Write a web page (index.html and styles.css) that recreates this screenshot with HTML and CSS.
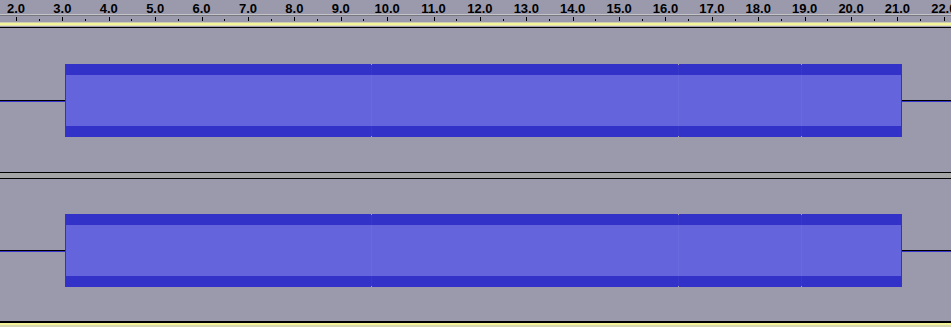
FILE: index.html
```html
<!DOCTYPE html>
<html lang="en">
<head>
    <meta charset="UTF-8">
    <title>Tracks</title>
    <link rel="stylesheet" href="styles.css">
</head>
<body>
<div class="view">
    <!--时间标尺-->
    <div class="ruler">
        <div class="labels">
            <span class="cell">2.0</span><span class="cell">3.0</span><span class="cell">4.0</span>
            <span class="cell">5.0</span><span class="cell">6.0</span><span class="cell">7.0</span>
            <span class="cell">8.0</span><span class="cell">9.0</span><span class="cell">10.0</span>
            <span class="cell">11.0</span><span class="cell">12.0</span><span class="cell">13.0</span>
            <span class="cell">14.0</span><span class="cell">15.0</span><span class="cell">16.0</span>
            <span class="cell">17.0</span><span class="cell">18.0</span><span class="cell">19.0</span>
            <span class="cell">20.0</span><span class="cell">21.0</span><span class="cell">22.0</span>
        </div>
        <div class="rule"></div>
        <div class="ticks">
            <div class="tcell"><i class="major"></i><i class="minor"></i></div>
            <div class="tcell"><i class="major"></i><i class="minor"></i></div>
            <div class="tcell"><i class="major"></i><i class="minor"></i></div>
            <div class="tcell"><i class="major"></i><i class="minor"></i></div>
            <div class="tcell"><i class="major"></i><i class="minor"></i></div>
            <div class="tcell"><i class="major"></i><i class="minor"></i></div>
            <div class="tcell"><i class="major"></i><i class="minor"></i></div>
            <div class="tcell"><i class="major"></i><i class="minor"></i></div>
            <div class="tcell"><i class="major"></i><i class="minor"></i></div>
            <div class="tcell"><i class="major"></i><i class="minor"></i></div>
            <div class="tcell"><i class="major"></i><i class="minor"></i></div>
            <div class="tcell"><i class="major"></i><i class="minor"></i></div>
            <div class="tcell"><i class="major"></i><i class="minor"></i></div>
            <div class="tcell"><i class="major"></i><i class="minor"></i></div>
            <div class="tcell"><i class="major"></i><i class="minor"></i></div>
            <div class="tcell"><i class="major"></i><i class="minor"></i></div>
            <div class="tcell"><i class="major"></i><i class="minor"></i></div>
            <div class="tcell"><i class="major"></i><i class="minor"></i></div>
            <div class="tcell"><i class="major"></i><i class="minor"></i></div>
            <div class="tcell"><i class="major"></i><i class="minor"></i></div>
            <div class="tcell"><i class="major"></i><i class="minor"></i></div>
        </div>
    </div>
    <div class="focus-top"></div>

    <!--第一条音轨-->
    <div class="track track-first">
        <div class="side side-left"></div>
        <div class="clip">
            <div class="seg seg-a"></div><div class="cut"></div>
            <div class="seg seg-b"></div><div class="cut"></div>
            <div class="seg seg-c"></div><div class="cut"></div>
            <div class="seg seg-d"></div>
        </div>
        <div class="side side-right"></div>
    </div>

    <div class="divider"></div>

    <!--第二条音轨-->
    <div class="track track-second">
        <div class="side side-left"></div>
        <div class="clip">
            <div class="seg seg-a"></div><div class="cut"></div>
            <div class="seg seg-b"></div><div class="cut"></div>
            <div class="seg seg-c"></div><div class="cut"></div>
            <div class="seg seg-d"></div>
        </div>
        <div class="side side-right"></div>
    </div>
    <div class="focus-bottom"></div>
</div>
</body>
</html>
```

FILE: styles.css
```css
*{
    margin: 0;
    padding: 0;
}
body{
    width: 951px;
    height: 327px;
    overflow: hidden;
    background-color: #9a9aac;
    font-family: "Liberation Sans", Arial, sans-serif;
}
.view{
    width: 951px;
    overflow: hidden;
}
/*标尺*/
.ruler{
    height: 22px;
    background-color: #9a9aac;
}
.labels{
    display: flex;
    margin-left: -7.2px;
    height: 14px;
    padding-top: 1px;
    box-sizing: border-box;
    line-height: 15px;
}
.cell{
    flex: none;
    width: 46.4px;
    text-align: center;
    font-size: 13px;
    font-weight: bold;
    color: #000;
}
.rule{
    height: 0;
    border-top: 1px solid #c4c4c8;
    border-bottom: 1px solid #76767e;
}
.ticks{
    display: flex;
    margin-left: -7.2px;
    margin-top: 1px;
    height: 4px;
}
.tcell{
    flex: none;
    width: 46.4px;
    display: flex;
    align-items: flex-end;
}
.major{
    width: 1px;
    height: 4px;
    margin-left: 23.2px;
    background-color: #000;
}
.minor{
    width: 1px;
    height: 2px;
    margin-left: 22.2px;
    background-color: #000;
}
/*焦点边框*/
.focus-top{
    height: 5px;
    border-bottom: 1px solid #000;
    background: linear-gradient(to bottom, #cdcdb4 0 1px, #f4f49a 1px 3px, #dedeb2 3px 4px, #9a9aac 4px);
}
.focus-bottom{
    height: 6px;
    background: linear-gradient(to bottom, #000 0 2px, #f4f49a 2px 4px, #d6d6b0 4px);
}
/*音轨*/
.track{
    display: flex;
    align-items: flex-start;
}
.track-first{
    height: 144px;
    padding-top: 36px;
    box-sizing: border-box;
}
.track-second{
    height: 142px;
    padding-top: 35px;
    box-sizing: border-box;
}
.divider{
    height: 5px;
    border-top: 1px solid #000;
    border-bottom: 1px solid #000;
    background-color: #a4a4a6;
}
/*静音部分的中线*/
.side{
    height: 1px;
    margin-top: 36px;
    background-color: #000;
    border-bottom: 1px solid #3232c8;
}
.side-left{
    flex: none;
    width: 65px;
}
.side-right{
    flex: 1;
}
.clip{
    flex: none;
    display: flex;
    width: 837px;
    height: 73px;
    padding: 0 1px;
    box-sizing: border-box;
    background-color: #3232c8;
}
.seg{
    flex: none;
    height: 73px;
    background: linear-gradient(to bottom, #3232c8 0 11px, #6464dc 11px 62px, #3232c8 62px);
}
.seg-a{
    width: 305px;
}
.seg-b{
    width: 306px;
}
.seg-c{
    width: 122px;
}
.seg-d{
    width: 99px;
}
/*剪辑分割线*/
.cut{
    flex: none;
    width: 1px;
    height: 73px;
    background: linear-gradient(to bottom, #a4a4c4 0 1px, #3838ca 1px 11px, #6a6ade 11px 62px, #3838ca 62px 72px, #a4a4c4 72px);
}
```
